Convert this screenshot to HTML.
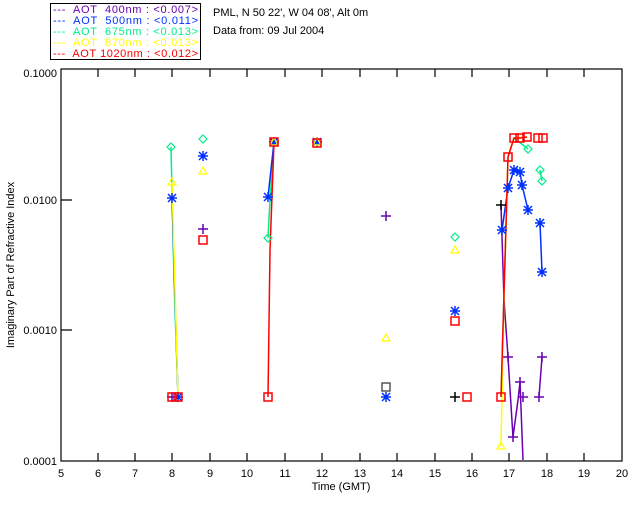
<!DOCTYPE html>
<html><head><style>
body{margin:0;background:#fff;}
svg{display:block;font-family:"Liberation Sans",sans-serif;}
text{white-space:pre;}
</style></head><body>
<svg width="640" height="512" viewBox="0 0 640 512" xmlns="http://www.w3.org/2000/svg" xml:space="preserve">
<defs>
<g id="pl"><path d="M-5 0H5M0-5V5" stroke-width="1.5"/></g>
<g id="as"><path d="M-5 0H5M0-5V5M-4-4L4 4M-4 4L4-4" stroke-width="1.5"/></g>
<g id="di"><path d="M0-4L4 0L0 4L-4 0Z" fill="none" stroke-width="1.2"/></g>
<g id="tr"><path d="M0-4L4 3H-4Z" fill="none" stroke-width="1.2"/></g>
<g id="sq"><rect x="-4" y="-4" width="8" height="8" fill="none" stroke-width="1.5"/></g>
</defs>
<rect x="50.5" y="3.5" width="150" height="56" fill="none" stroke="#000"/>
<g font-size="11">
<text x="53" y="13" fill="#6a00b0" textLength="145">---  AOT  400nm : &lt;0.007&gt;</text>
<text x="53" y="24" fill="#0030ff" textLength="145">---  AOT  500nm : &lt;0.011&gt;</text>
<text x="53" y="35" fill="#00ee88" textLength="145">---  AOT  675nm : &lt;0.013&gt;</text>
<text x="53" y="46" fill="#ffff00" textLength="145">---  AOT  870nm : &lt;0.013&gt;</text>
<text x="53" y="57" fill="#ff0000" textLength="145">---  AOT 1020nm : &lt;0.012&gt;</text>
<text x="213" y="16" fill="#000">PML, N 50 22', W 04 08', Alt 0m</text>
<text x="213" y="34" fill="#000">Data from: 09 Jul 2004</text>
</g>
<g stroke="#000" stroke-width="1.2" fill="none">
<rect x="61" y="69" width="561" height="392"/>
<path d="M98 461v-8M135 461v-8M172 461v-8M210 461v-8M247 461v-8M285 461v-8M322 461v-8M360 461v-8M397 461v-8M435 461v-8M472 461v-8M509 461v-8M547 461v-8M584 461v-8"/>
<path d="M98 69v8M135 69v8M172 69v8M210 69v8M247 69v8M285 69v8M322 69v8M360 69v8M397 69v8M435 69v8M472 69v8M509 69v8M547 69v8M584 69v8"/>
<path d="M61 200h11M61 330h11"/>
</g>
<g font-size="11" fill="#000">
<text x="57" y="77" text-anchor="end">0.1000</text>
<text x="57" y="204" text-anchor="end">0.0100</text>
<text x="57" y="334" text-anchor="end">0.0010</text>
<text x="57" y="465" text-anchor="end">0.0001</text>
<g text-anchor="middle">
<text x="61" y="477">5</text><text x="98" y="477">6</text><text x="135" y="477">7</text><text x="172" y="477">8</text><text x="210" y="477">9</text><text x="247" y="477">10</text><text x="285" y="477">11</text><text x="322" y="477">12</text><text x="360" y="477">13</text><text x="397" y="477">14</text><text x="435" y="477">15</text><text x="472" y="477">16</text><text x="509" y="477">17</text><text x="547" y="477">18</text><text x="584" y="477">19</text><text x="622" y="477">20</text>
<text x="341" y="490">Time (GMT)</text>
</g>
<text transform="translate(14 265) rotate(-90)" text-anchor="middle">Imaginary Part of Refractive Index</text>
</g>
<g fill="none" stroke-width="1.5">
<polyline points="171,147 174,280 178,397" stroke="#00ee88"/>
<polyline points="172,198 176,330 178,397" stroke="#0030ff"/>
<polyline points="172,182 178,397" stroke="#ffff00"/>
<polyline points="268,238 270,200 274,142" stroke="#00ee88"/>
<polyline points="268,197 274,142" stroke="#0030ff"/>
<polyline points="268,397 270,250 274,142" stroke="#ff0000"/>
<polyline points="501,205 504,300 508,357 513,437 518,400 520,382 523,460" stroke="#6a00b0"/>
<polyline points="539,397 542,357" stroke="#6a00b0"/>
<polyline points="502,230 508,188 514,170 520,172 522,185 528,210" stroke="#0030ff"/>
<polyline points="540,223 542,272" stroke="#0030ff"/>
<polyline points="501,397 508,157 514,138 528,149" stroke="#00ee88"/>
<polyline points="540,170 542,181" stroke="#00ee88"/>
<polyline points="501,446 504,300 508,157 514,138 527,137" stroke="#ffff00"/>
<polyline points="501,397 508,157 514,138 520,138 527,137" stroke="#ff0000"/>
</g>
<g stroke="#00ee88"><use href="#di" x="171" y="147"/><use href="#di" x="203" y="139"/><use href="#di" x="268" y="238"/><use href="#di" x="528" y="149"/><use href="#di" x="540" y="170"/><use href="#di" x="542" y="181"/><use href="#di" x="455" y="237"/></g>
<g stroke="#0030ff"><use href="#as" x="172" y="198"/><use href="#as" x="203" y="156"/><use href="#as" x="268" y="197"/><use href="#as" x="274" y="142"/><use href="#as" x="317" y="142"/><use href="#as" x="386" y="397"/><use href="#as" x="455" y="311"/><use href="#as" x="502" y="230"/><use href="#as" x="508" y="188"/><use href="#as" x="514" y="170"/><use href="#as" x="520" y="172"/><use href="#as" x="522" y="185"/><use href="#as" x="528" y="210"/><use href="#as" x="540" y="223"/><use href="#as" x="542" y="272"/><use href="#as" x="178" y="397"/></g>
<g stroke="#ffff00"><use href="#tr" x="172" y="182"/><use href="#tr" x="203" y="171"/><use href="#tr" x="386" y="338"/><use href="#tr" x="455" y="250"/><use href="#tr" x="501" y="446"/><use href="#tr" x="274" y="142"/><use href="#tr" x="317" y="142"/></g>
<g stroke="#6a00b0"><use href="#pl" x="203" y="229"/><use href="#pl" x="386" y="216"/><use href="#pl" x="508" y="357"/><use href="#pl" x="513" y="437"/><use href="#pl" x="520" y="382"/><use href="#pl" x="523" y="397"/><use href="#pl" x="539" y="397"/><use href="#pl" x="542" y="357"/><use href="#pl" x="172" y="397"/></g>
<g stroke="#000"><use href="#pl" x="455" y="397"/><use href="#pl" x="501" y="205"/></g>
<g stroke="#555"><use href="#sq" x="386" y="387"/></g>
<g stroke="#ff0000"><use href="#sq" x="172" y="397"/><use href="#sq" x="178" y="397"/><use href="#sq" x="203" y="240"/><use href="#sq" x="268" y="397"/><use href="#sq" x="274" y="142"/><use href="#sq" x="317" y="143"/><use href="#sq" x="455" y="321"/><use href="#sq" x="467" y="397"/><use href="#sq" x="501" y="397"/><use href="#sq" x="508" y="157"/><use href="#sq" x="514" y="138"/><use href="#sq" x="520" y="138"/><use href="#sq" x="527" y="137"/><use href="#sq" x="538" y="138"/><use href="#sq" x="543" y="138"/></g>
</svg>
</body></html>
